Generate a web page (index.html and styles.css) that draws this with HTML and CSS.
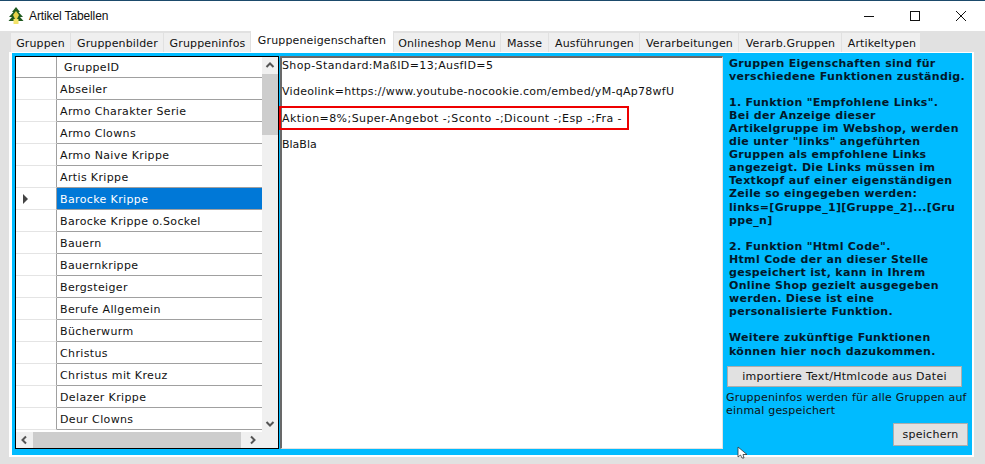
FILE: index.html
```html
<!DOCTYPE html>
<html lang="de">
<head>
<meta charset="utf-8">
<title>Artikel Tabellen</title>
<link rel="stylesheet" href="styles.css">
</head>
<body>
<div class="window">
  <header class="titlebar">
    <svg class="appicon" width="16" height="18" viewBox="0 0 16 18"><path d="M8 0 L12 5 H10.5 L15 10 H12 L15.5 14 H.5 L4 10 H1 L5.500 5 H4 Z" fill="#1f5a1f"/><path d="M8 4 L11 8 L8 14 L5 8 Z" fill="#e8d44a"/><rect x="5.500" y="12" width="5" height="5" fill="#f3e36a"/></svg>
    <span class="apptitle">Artikel Tabellen</span>
    <div class="controls">
      <svg width="12" height="12" viewBox="0 0 12 12"><path d="M1 6.500H11" stroke="#111" fill="none"/></svg>
      <svg width="12" height="12" viewBox="0 0 12 12"><rect x="1.500" y="1.500" width="9" height="9" stroke="#111" fill="none"/></svg>
      <svg width="12" height="12" viewBox="0 0 12 12"><path d="M1 1L11 11M11 1L1 11" stroke="#111" fill="none"/></svg>
    </div>
  </header>
  <nav class="tabs">
    <span class="tab t1">Gruppen</span>
    <span class="tab t2">Gruppenbilder</span>
    <span class="tab t3">Gruppeninfos</span>
    <span class="tab active">Gruppeneigenschaften</span>
    <span class="tab t5">Onlineshop Menu</span>
    <span class="tab t6">Masse</span>
    <span class="tab t7">Ausführungen</span>
    <span class="tab t8">Verarbeitungen</span>
    <span class="tab t9">Verarb.Gruppen</span>
    <span class="tab t10">Artikeltypen</span>
  </nav>
  <main class="page">
    <div class="blue">
      <section class="grid">
        <div class="grid-top">
          <div class="rows">
            <div class="row head"><div class="rh"></div><div class="cell">GruppeID</div></div>
            <div class="row"><div class="rh"></div><div class="cell">Abseiler</div></div>
            <div class="row"><div class="rh"></div><div class="cell">Armo Charakter Serie</div></div>
            <div class="row"><div class="rh"></div><div class="cell">Armo Clowns</div></div>
            <div class="row"><div class="rh"></div><div class="cell">Armo Naive Krippe</div></div>
            <div class="row"><div class="rh"></div><div class="cell">Artis Krippe</div></div>
            <div class="row selected"><div class="rh"><i class="marker"></i></div><div class="cell">Barocke Krippe</div></div>
            <div class="row"><div class="rh"></div><div class="cell">Barocke Krippe o.Sockel</div></div>
            <div class="row"><div class="rh"></div><div class="cell">Bauern</div></div>
            <div class="row"><div class="rh"></div><div class="cell">Bauernkrippe</div></div>
            <div class="row"><div class="rh"></div><div class="cell">Bergsteiger</div></div>
            <div class="row"><div class="rh"></div><div class="cell">Berufe Allgemein</div></div>
            <div class="row"><div class="rh"></div><div class="cell">Bücherwurm</div></div>
            <div class="row"><div class="rh"></div><div class="cell">Christus</div></div>
            <div class="row"><div class="rh"></div><div class="cell">Christus mit Kreuz</div></div>
            <div class="row"><div class="rh"></div><div class="cell">Delazer Krippe</div></div>
            <div class="row"><div class="rh"></div><div class="cell">Deur Clowns</div></div>
          </div>
          <div class="vscroll">
            <svg width="16" height="17" viewBox="0 0 16 17"><path d="M4.500 10L8 6.500L11.500 10" stroke="#555" stroke-width="2" fill="none"/></svg>
            <div class="vthumb"></div>
            <div class="vspace"></div>
            <svg width="16" height="17" viewBox="0 0 16 17"><path d="M4.500 7L8 10.500L11.500 7" stroke="#555" stroke-width="2" fill="none"/></svg>
          </div>
        </div>
        <div class="hscroll">
          <svg width="17" height="16" viewBox="0 0 17 16"><path d="M10 4.500L6.500 8L10 11.500" stroke="#555" stroke-width="2" fill="none"/></svg>
          <div class="hthumb"></div>
          <svg width="17" height="16" viewBox="0 0 17 16"><path d="M7 4.500L10.500 8L7 11.500" stroke="#555" stroke-width="2" fill="none"/></svg>
        </div>
      </section>
      <section class="editor">
        <p class="line l1">Shop-Standard:MaßID=13;AusfID=5</p>
        <p class="line l2">Videolink=https://www.youtube-nocookie.com/embed/yM-qAp78wfU</p>
        <p class="line l3">Aktion=8%;Super-Angebot -;Sconto -;Dicount -;Esp -;Fra -</p>
        <p class="line">BlaBla</p>
        <div class="highlight"></div>
      </section>
      <aside class="side">
        <div class="help">Gruppen Eigenschaften sind für
verschiedene Funktionen zuständig.

1. Funktion "Empfohlene Links".
Bei der Anzeige dieser
Artikelgruppe im Webshop, werden
die unter "links" angeführten
Gruppen als empfohlene Links
angezeigt. Die Links müssen im
Textkopf auf einer eigenständigen
Zeile so eingegeben werden:
links=[Gruppe_1][Gruppe_2]...[Gru
ppe_n]

2. Funktion "Html Code".
Html Code der an dieser Stelle
gespeichert ist, kann in Ihrem
Online Shop gezielt ausgegeben
werden. Diese ist eine
personalisierte Funktion.

Weitere zukünftige Funktionen
können hier noch dazukommen.</div>
        <button class="btn import">importiere Text/Htmlcode aus Datei</button>
        <p class="note">Gruppeninfos werden für alle Gruppen auf einmal gespeichert</p>
        <button class="btn save">speichern</button>
      </aside>
    </div>
  </main>
  <svg class="cursor" width="13" height="13" viewBox="0 0 13 13"><path d="M1 1V11L3.500 9L5 12H7L6 8.500H10Z" fill="#fff" stroke="#333" stroke-width=".8"/></svg>
</div>
</body>
</html>
```

FILE: styles.css
```css
* { box-sizing: border-box; }
html, body { margin: 0; padding: 0; }
body { width: 985px; height: 464px; overflow: hidden; font-family: "DejaVu Sans", Verdana, sans-serif; font-size: 11px; color: #111; }
.window { position: relative; width: 985px; height: 464px; background: #e1e1e1; }
.titlebar { height: 31px; background: #fff; border-top: 1px solid #1b4a6b; display: flex; align-items: center; padding-left: 8px; }
.appicon { margin-right: 5px; }
.apptitle { font-family: "Liberation Sans", Arial, sans-serif; font-size: 12px; letter-spacing: -.12px; }
.controls { margin-left: auto; display: flex; gap: 34px; padding-right: 18px; }
.tabs { display: flex; align-items: flex-end; height: 21px; padding-left: 11px; gap: 1px; letter-spacing: .14px; }
.tab { height: 19px; background: #efefef; display: flex; align-items: center; justify-content: center; padding-top: 1px; }
.t1 { width: 59px; }
.t2 { width: 92px; padding-left: 1px; }
.t3 { width: 86px; padding-left: 1px; }
.active { width: 142px; height: 21px; background: #fff; padding-top: 0; padding-bottom: 2px; }
.t5 { width: 106px; }
.t6 { width: 47px; }
.t7 { width: 90px; padding-left: 1px; }
.t8 { width: 98px; padding-left: 1px; }
.t9 { width: 102px; padding-left: 1px; }
.t10 { width: 78px; padding-left: 2px; }
.page { margin-left: 9px; width: 965px; height: 405px; background: #fff; padding: 1px 2px 2px 3px; }
.blue { height: 402px; background: #00bbff; display: flex; padding: 3px 0 6px 3px; }
.grid { width: 264px; flex: none; background: #f0f0f0; border: 1px solid #000; display: flex; flex-direction: column; }
.grid-top { flex: 1; display: flex; min-height: 0; }
.rows { flex: 1; background: #fff; overflow: hidden; letter-spacing: .37px; }
.row { display: flex; height: 22px; }
.head { height: 21px; }
.rh { width: 41px; border-bottom: 1px solid #e4e4e4; border-right: 1px solid #a0a0a0; display: flex; align-items: center; padding-left: 7px; flex: none; }
.cell { flex: 1; border-bottom: 1px solid #a0a0a0; display: flex; align-items: center; padding-left: 3px; padding-top: 1px; }
.head .rh { border-bottom-color: #a0a0a0; }
.head .cell { padding-left: 7px; }
.selected .cell { background: #0078d7; color: #fff; }
.marker { width: 0; height: 0; border-left: 5px solid #444; border-top: 5px solid transparent; border-bottom: 5px solid transparent; }
.vscroll { width: 16px; display: flex; flex-direction: column; background: #f0f0f0; flex: none; }
.vthumb { height: 61px; background: #cdcdcd; }
.vspace { flex: 1; }
.hscroll { height: 16px; display: flex; flex: none; background: #f0f0f0; }
.hthumb { width: 208px; background: #cdcdcd; margin-right: 3px; }
.editor { position: relative; width: 443px; flex: none; margin-left: 1px; background: #fff; border-top: 2px solid #696969; border-left: 2px solid #696969; border-right: 1px solid #e3e3e3; border-bottom: 1px solid #e3e3e3; padding: 1px 0 0 0; }
.line { margin: 0; height: 26.300px; line-height: 13px; }
.l1 { letter-spacing: .39px; }
.l2 { letter-spacing: .27px; }
.l3 { letter-spacing: .43px; }
.highlight { position: absolute; left: -3px; top: 48px; width: 350px; height: 24px; border: 2px solid #ee0000; }
.side { width: 248px; flex: none; margin-left: 1px; position: relative; }
.help { font-weight: 700; font-size: 11px; line-height: 13.100px; white-space: pre; letter-spacing: .32px; padding-left: 5px; padding-top: .5px; height: 310px; color: #02182a; }
.btn { font: 11px "DejaVu Sans", Verdana, sans-serif; background: #e1e1e1; border: 1px solid #adadad; color: #111; padding: 0; display: block; letter-spacing: .27px; }
.import { width: 235px; height: 21px; margin-left: 3px; }
.note { margin: 4px 0 0 2px; width: 245px; line-height: 13px; letter-spacing: .2px; }
.save { width: 75px; height: 23px; margin: 6px 0 0 169px; }
.cursor { position: absolute; left: 737px; top: 446px; }
```
